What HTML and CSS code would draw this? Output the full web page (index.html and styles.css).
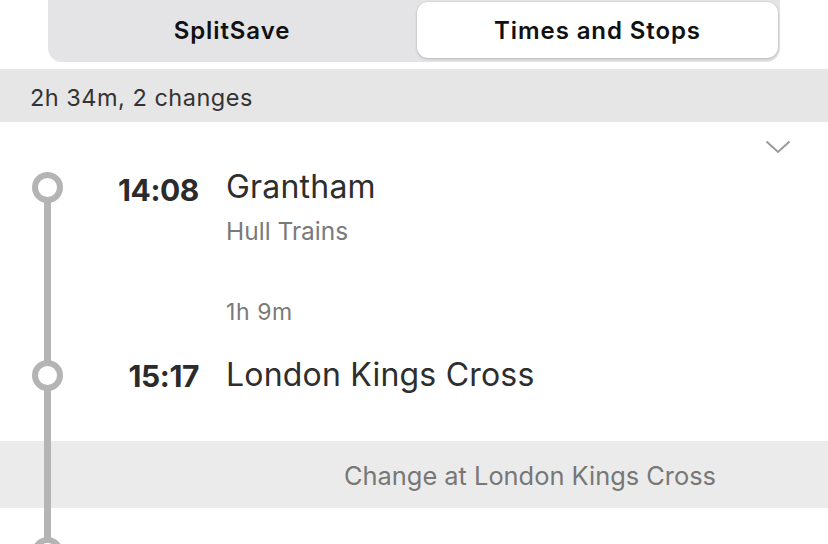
FILE: index.html
```html
<!DOCTYPE html>
<html lang="en">
<head>
<meta charset="utf-8">
<title>Times and Stops</title>
<link rel="stylesheet" href="styles.css">
</head>
<body>
  <div class="seg">
    <div class="seg-item">SplitSave</div>
    <div class="seg-item seg-item--active">Times and Stops</div>
  </div>

  <div class="summary">2h 34m, 2 changes</div>

  <section class="leg">
    <div class="leg-head">
      <svg class="chevron" width="26" height="14" viewBox="0 0 26 14" aria-hidden="true">
        <polyline points="1.5,1.5 13,12 24.5,1.5" fill="none" stroke="#9a9a9a" stroke-width="2"/>
      </svg>
    </div>

    <div class="stop stop--depart">
      <div class="rail"><span class="dot"></span></div>
      <div class="time">14:08</div>
      <div class="info">
        <div class="station">Grantham</div>
        <div class="operator">Hull Trains</div>
        <div class="duration">1h 9m</div>
      </div>
    </div>

    <div class="stop stop--arrive">
      <div class="rail"><span class="dot"></span></div>
      <div class="time">15:17</div>
      <div class="info">
        <div class="station">London Kings Cross</div>
      </div>
    </div>
  </section>

  <div class="change">Change at London Kings Cross</div>

  <section class="leg leg--next">
    <div class="stop">
      <div class="rail"><span class="dot"></span></div>
      <div class="time"></div>
      <div class="info"></div>
    </div>
  </section>
</body>
</html>
```

FILE: styles.css
```css
* { box-sizing: border-box; }

html, body {
  margin: 0;
  padding: 0;
  background: #ffffff;
}

body {
  width: 828px;
  height: 544px;
  overflow: hidden;
  font-family: "Inter", "Liberation Sans", sans-serif;
  color: #2e2e2e;
}

/* segmented control */
.seg {
  margin: 0 48px 0 48px;
  height: 62px;
  padding: 2px 2px 4px 2px;
  background: #e4e4e6;
  border-radius: 0 0 14px 14px;
  display: grid;
  grid-template-columns: 1fr 1fr;
}

.seg-item {
  display: flex;
  align-items: center;
  justify-content: center;
  padding-top: 1px;
  font-size: 24px;
  font-weight: 600;
  color: #111;
  letter-spacing: 0.9px;
}

.seg-item--active {
  background: #ffffff;
  border-radius: 11px;
  margin-left: 3px;
  box-shadow: 0 1px 3px rgba(0, 0, 0, 0.18), 0 0 0 0.5px rgba(0, 0, 0, 0.06);
}

/* summary bar */
.summary {
  margin-top: 7px;
  height: 53px;
  background: #e6e6e6;
  padding-left: 30px;
  padding-top: 3px;
  display: flex;
  align-items: center;
  font-size: 23.5px;
  color: #333;
  letter-spacing: 0.5px;
}

/* journey leg */
.leg {
  background-image: linear-gradient(#b4b4b4, #b4b4b4);
  background-repeat: no-repeat;
  background-size: 7px 100%;
  background-position: 44px 65px;
  padding-bottom: 50px;
}

.leg-head {
  height: 50px;
  display: flex;
  justify-content: flex-end;
  padding-right: 37px;
  padding-top: 18px;
}

.chevron { display: block; }

.stop {
  display: grid;
  grid-template-columns: 94px 105px 1fr;
  align-items: start;
}

.stop--arrive { margin-top: 33px; }

.rail {
  padding-left: 32px;
}

.dot {
  display: block;
  width: 31px;
  height: 31px;
  border-radius: 50%;
  border: 6px solid #b4b4b4;
  background: #ffffff;
}

.time {
  text-align: right;
  font-size: 30px;
  font-weight: 700;
  line-height: 30px;
  padding-top: 1px;
  color: #2b2b2b;
  letter-spacing: -0.4px;
}

.stop--depart .time { padding-top: 3px; }

.info {
  padding-left: 27px;
}

.station {
  font-size: 32px;
  line-height: 30px;
  color: #2e2e2e;
  letter-spacing: 0.2px;
}

.operator {
  margin-top: 14px;
  font-size: 24.5px;
  line-height: 30px;
  color: #7a7a7a;
}

.duration {
  margin-top: 51px;
  font-size: 23px;
  line-height: 30px;
  color: #7a7a7a;
  letter-spacing: 0.6px;
}

/* change bar */
.change {
  height: 67px;
  background-color: #ebebeb;
  background-image: linear-gradient(#b4b4b4, #b4b4b4);
  background-repeat: no-repeat;
  background-size: 7px 100%;
  background-position: 44px 0;
  padding-left: 232px;
  padding-top: 2px;
  display: flex;
  align-items: center;
  justify-content: center;
  font-size: 25.4px;
  color: #777;
}

.leg--next {
  height: 36px;
  overflow: hidden;
  padding-top: 29px;
  padding-bottom: 0;
  background-position: 44px 0;
}
```
